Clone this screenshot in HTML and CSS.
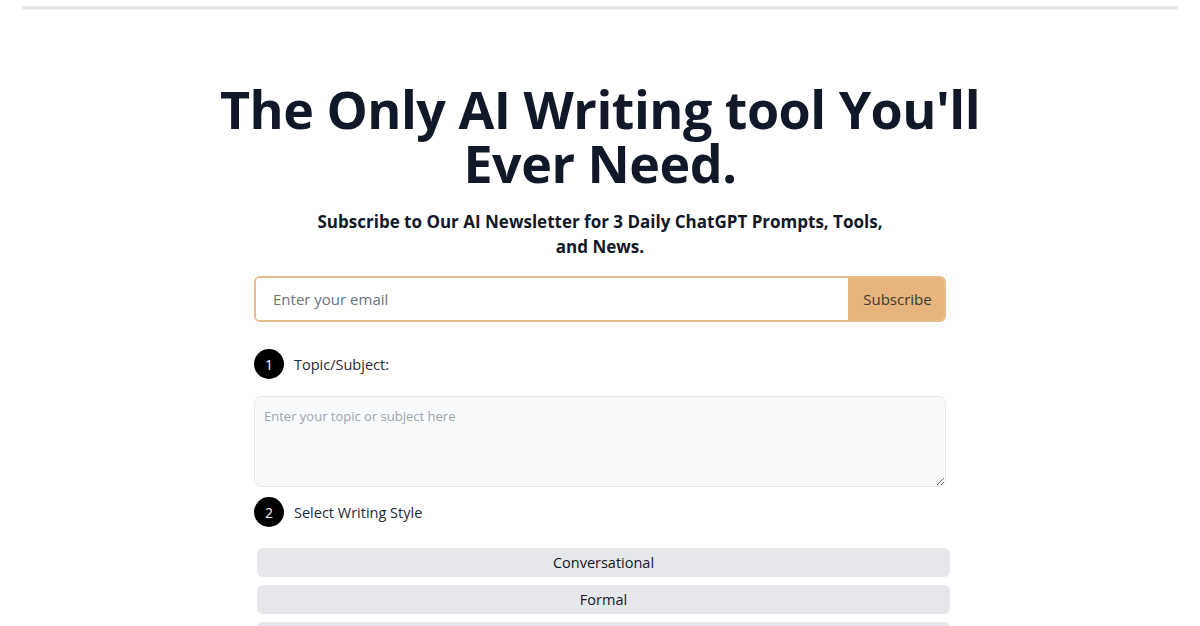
FILE: index.html
```html
<!DOCTYPE html>
<html lang="en">
<head>
<meta charset="utf-8">
<title>AI Writing Tool</title>
<link rel="stylesheet" href="styles.css">
</head>
<body>
<div class="topbar"></div>
<main class="main">
  <h1 class="title">The Only AI Writing tool You'll Ever Need.</h1>
  <p class="subtitle">Subscribe to Our AI Newsletter for 3 Daily ChatGPT Prompts, Tools, and News.</p>
  <form class="subscribe">
    <input class="email" type="email" placeholder="Enter your email">
    <button class="sub-btn" type="button">Subscribe</button>
  </form>
  <div class="step">
    <span class="badge">1</span>
    <span class="step-label">Topic/Subject:</span>
  </div>
  <textarea class="topic" placeholder="Enter your topic or subject here"></textarea>
  <div class="step step-2">
    <span class="badge">2</span>
    <span class="step-label">Select Writing Style</span>
  </div>
  <div class="styles">
    <button class="style-btn" type="button">Conversational</button>
    <button class="style-btn" type="button">Formal</button>
    <button class="style-btn" type="button">Persuasive</button>
  </div>
</main>
</body>
</html>
```

FILE: styles.css
```css
* { box-sizing: border-box; }
body {
  margin: 0;
  background: #ffffff;
  font-family: "Open Sans", "Noto Sans", sans-serif;
  color: #111827;
  overflow: hidden;
}
.topbar {
  margin: 6px 22px 0;
  height: 3px;
  background: #e5e7eb;
  box-shadow: 0 1px 2px rgba(0,0,0,0.06);
}
.main {
  width: 692px;
  margin: 0 auto;
  padding-top: 73px;
  display: flex;
  flex-direction: column;
}
.title {
  margin: 0 -54px;
  font-size: 52px;
  line-height: 54px;
  font-weight: 700;
  text-align: center;
  color: #111827;
  letter-spacing: -0.5px;
}
.subtitle {
  margin: 19px 54px 0;
  font-size: 17px;
  line-height: 25px;
  font-weight: 700;
  text-align: center;
  color: #111827;
}
.subscribe {
  margin: 17px 0 0;
  display: flex;
  height: 46px;
  border: 2px solid #e8bd8d;
  border-radius: 6px;
  overflow: hidden;
}
.email {
  flex: 1;
  border: none;
  outline: none;
  padding: 0 17px;
  font-family: "Open Sans", sans-serif;
  font-size: 15px;
  color: #374151;
}
.email::placeholder { color: #6b7280; }
.sub-btn {
  width: 96px;
  border: none;
  background: #e8b47d;
  font-family: "Open Sans", sans-serif;
  font-size: 15px;
  color: #3f3a35;
  padding: 0 0 0 3px;
}
.step {
  margin-top: 27px;
  display: flex;
  align-items: center;
  gap: 10px;
}
.step-2 { margin-top: 10px; }
.badge {
  width: 30px;
  height: 30px;
  border-radius: 50%;
  background: #000000;
  color: #ffffff;
  display: flex;
  align-items: center;
  justify-content: center;
  font-size: 14px;
  font-weight: 400;
}
.step-label {
  font-size: 14.5px;
  color: #1f2937;
}
.topic {
  margin-top: 17px;
  height: 91px;
  resize: vertical;
  background: #f9fafb;
  border: 1px solid #e5e7eb;
  border-radius: 8px;
  padding: 10px 9px;
  font-family: "Open Sans", sans-serif;
  font-size: 13px;
  outline: none;
}
.topic::placeholder { color: #9ca3af; }
.styles {
  margin: 21px -4px 0 3px;
  display: flex;
  flex-direction: column;
  gap: 8px;
}
.style-btn {
  height: 29px;
  border: none;
  border-radius: 6px;
  background: #e5e7eb;
  font-family: "Open Sans", sans-serif;
  font-size: 14.5px;
  color: #111827;
  padding: 0;
}
```
